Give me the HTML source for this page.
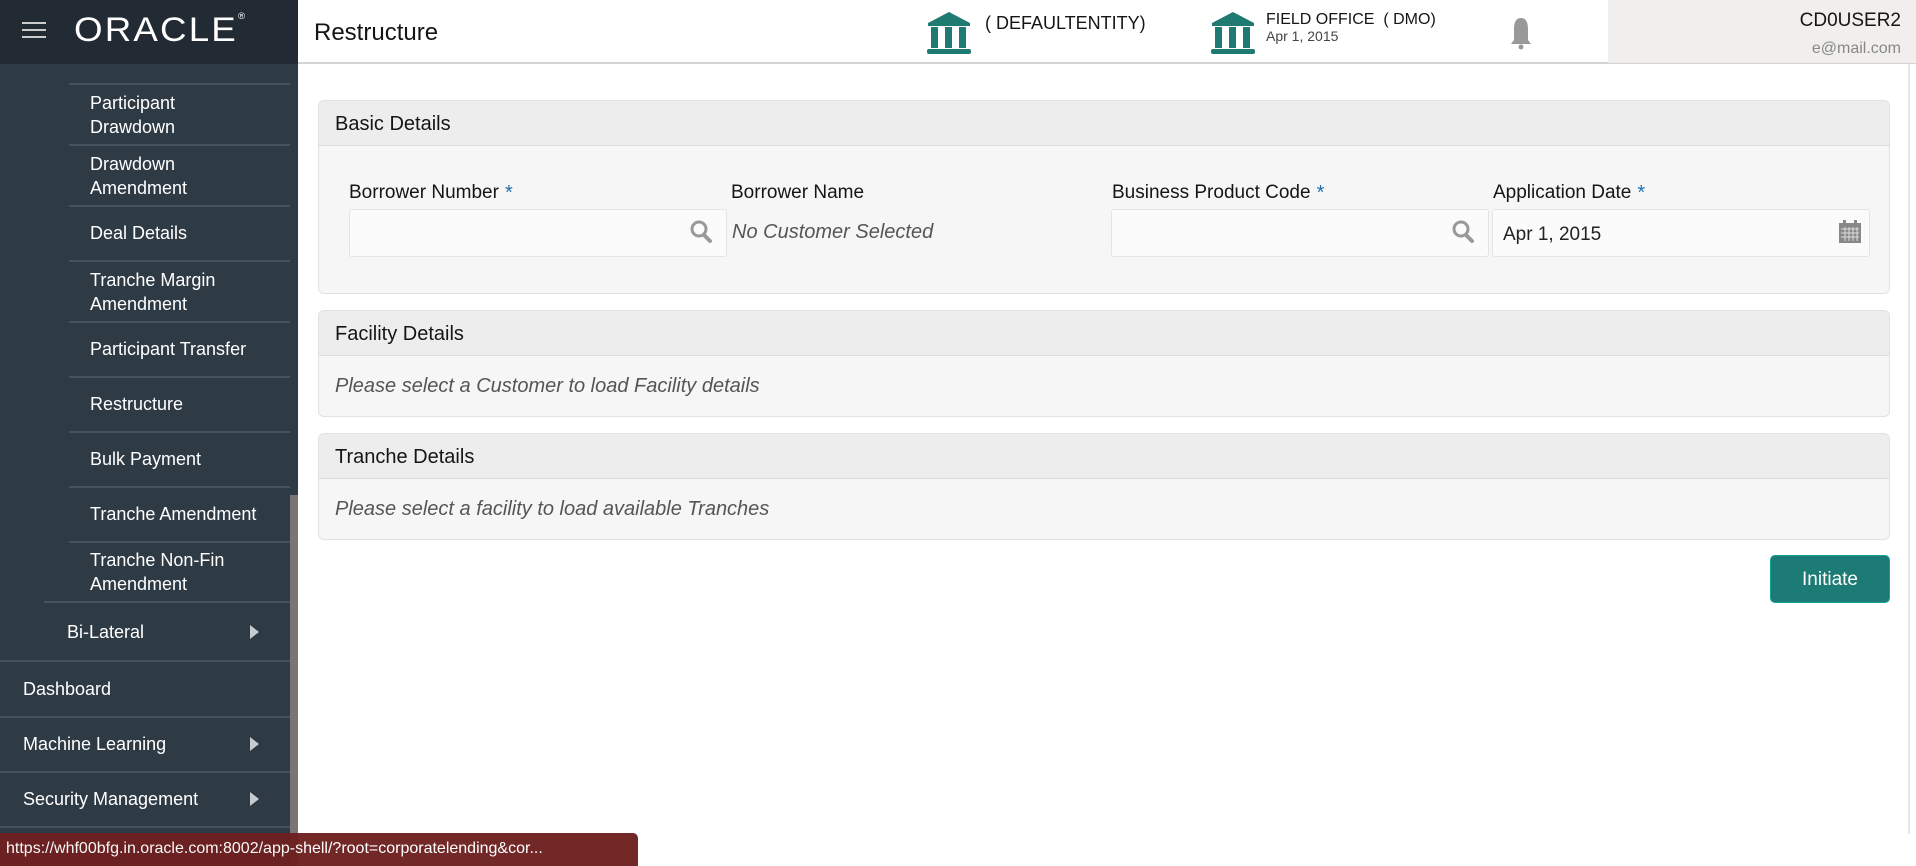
<!DOCTYPE html>
<html><head><meta charset="utf-8"><style>
*{margin:0;padding:0;box-sizing:border-box}
body{width:1916px;height:866px;overflow:hidden;background:#fff;font-family:"Liberation Sans",sans-serif;position:relative;color:#161513}
.a{position:absolute;white-space:nowrap}
#side{position:absolute;left:0;top:0;width:298px;height:866px;background:#2e3a44}
.si{position:absolute;color:#fff;font-size:18px;line-height:24px}
.dv{position:absolute;height:2px;background:#46535e}
.arr{position:absolute;width:0;height:0;border-top:7px solid transparent;border-bottom:7px solid transparent;border-left:9px solid #c8ccd0}
.panel{position:absolute;left:318px;width:1572px;border:1px solid #e2e2e2;border-radius:6px;background:#f6f6f6;overflow:hidden}
.ph{height:45px;background:#ededed;border-bottom:1px solid #dcdcdc;font-size:20px;line-height:47px;padding-left:16px}
.lbl{position:absolute;font-size:19px;top:182px}
.star{color:#1f6fb0;font-size:20px;vertical-align:top;margin-left:6px}
.inp{position:absolute;top:209px;height:48px;border:1px solid #e4e4e4;border-radius:3px;background:#fbfbfb}
.it{font-style:italic;color:#555;font-size:20px}
</style></head><body>
<div id="side">
<div style="position:absolute;left:0;top:0;width:298px;height:64px;background:#222a33"></div>
<div class="a" style="left:22px;top:22px;width:24px;height:2px;background:#ccc;box-shadow:0 7px 0 #ccc,0 14px 0 #ccc"></div>
<div class="a" style="left:74px;top:11px;color:#fff;font-size:34px;letter-spacing:2px;transform:scaleX(1.08);transform-origin:left">ORACLE<span style="font-size:9px;vertical-align:top">®</span></div>
<div class="dv" style="left:69px;top:83px;width:221px"></div>
<div class="si" style="left:90px;top:91px">Participant<br>Drawdown</div>
<div class="dv" style="left:69px;top:144px;width:221px"></div>
<div class="si" style="left:90px;top:152px">Drawdown<br>Amendment</div>
<div class="dv" style="left:69px;top:205px;width:221px"></div>
<div class="si" style="left:90px;top:221px">Deal Details</div>
<div class="dv" style="left:69px;top:260px;width:221px"></div>
<div class="si" style="left:90px;top:268px">Tranche Margin<br>Amendment</div>
<div class="dv" style="left:69px;top:321px;width:221px"></div>
<div class="si" style="left:90px;top:337px">Participant Transfer</div>
<div class="dv" style="left:69px;top:376px;width:221px"></div>
<div class="si" style="left:90px;top:392px">Restructure</div>
<div class="dv" style="left:69px;top:431px;width:221px"></div>
<div class="si" style="left:90px;top:447px">Bulk Payment</div>
<div class="dv" style="left:69px;top:486px;width:221px"></div>
<div class="si" style="left:90px;top:502px">Tranche Amendment</div>
<div class="dv" style="left:69px;top:541px;width:221px"></div>
<div class="si" style="left:90px;top:548px">Tranche Non-Fin<br>Amendment</div>
<div class="dv" style="left:44px;top:601px;width:246px"></div>
<div class="si" style="left:67px;top:620px">Bi-Lateral</div><div class="arr" style="left:250px;top:625px"></div>
<div class="dv" style="left:0;top:660px;width:290px"></div>
<div class="si" style="left:23px;top:677px">Dashboard</div>
<div class="dv" style="left:0;top:716px;width:290px"></div>
<div class="si" style="left:23px;top:732px">Machine Learning</div><div class="arr" style="left:250px;top:737px"></div>
<div class="dv" style="left:0;top:771px;width:290px"></div>
<div class="si" style="left:23px;top:787px">Security Management</div><div class="arr" style="left:250px;top:792px"></div>
<div class="dv" style="left:0;top:826px;width:290px"></div>
<div class="a" style="left:290px;top:495px;width:8px;height:371px;background:#7a7575"></div>
</div>
<div class="a" style="left:298px;top:0;width:1618px;height:64px;border-bottom:2px solid #d4d4d4;background:#fff"></div>
<div class="a" style="left:1608px;top:0;width:308px;height:63px;background:#f0efed"></div>
<div class="a" style="left:314px;top:19px;font-size:24px">Restructure</div>
<svg class="a" style="left:926px;top:12px" width="46" height="42" viewBox="0 0 46 42"><path d="M23 0L44 11V14H2V11Z" fill="#1f7a72"/><rect x="5" y="15" width="7" height="21" fill="#1f7a72"/><rect x="19" y="15" width="7" height="21" fill="#1f7a72"/><rect x="33" y="15" width="7" height="21" fill="#1f7a72"/><rect x="1" y="37" width="44" height="5" rx="2" fill="#1f7a72"/></svg>
<div class="a" style="left:985px;top:13px;font-size:18px">( DEFAULTENTITY)</div>
<svg class="a" style="left:1210px;top:12px" width="46" height="42" viewBox="0 0 46 42"><path d="M23 0L44 11V14H2V11Z" fill="#1f7a72"/><rect x="5" y="15" width="7" height="21" fill="#1f7a72"/><rect x="19" y="15" width="7" height="21" fill="#1f7a72"/><rect x="33" y="15" width="7" height="21" fill="#1f7a72"/><rect x="1" y="37" width="44" height="5" rx="2" fill="#1f7a72"/></svg>
<div class="a" style="left:1266px;top:11px;font-size:16px">FIELD OFFICE &nbsp;( DMO)</div>
<div class="a" style="left:1266px;top:28px;font-size:14px;color:#444">Apr 1, 2015</div>
<svg class="a" style="left:1510px;top:16px" width="22" height="34" viewBox="0 0 22 34"><path d="M11 2C5 2 4 8 4 14V24L1 28H21L18 24V14C18 8 17 2 11 2Z" fill="#999"/><circle cx="11" cy="31" r="2.5" fill="#999"/></svg>
<div class="a" style="right:15px;top:10px;font-size:19px">CD0USER2</div>
<div class="a" style="right:15px;top:40px;font-size:16px;color:#888">e@mail.com</div>
<div class="a" style="left:1908px;top:64px;width:2px;height:770px;background:#e6e6e6"></div>

<div class="panel" style="top:100px;height:194px"><div class="ph">Basic Details</div></div>
<div class="lbl" style="left:349px">Borrower Number<span class="star">*</span></div>
<div class="lbl" style="left:731px">Borrower Name</div>
<div class="lbl" style="left:1112px">Business Product Code<span class="star">*</span></div>
<div class="lbl" style="left:1493px">Application Date<span class="star">*</span></div>
<div class="inp" style="left:349px;width:378px"></div>
<div class="inp" style="left:1111px;width:378px"></div>
<div class="inp" style="left:1492px;width:378px"></div>
<svg class="a" style="left:689px;top:219px" width="24" height="26" viewBox="0 0 24 26"><circle cx="10" cy="10" r="7" fill="none" stroke="#999" stroke-width="3"/><path d="M15 16L21 22" stroke="#999" stroke-width="4" stroke-linecap="round"/></svg>
<svg class="a" style="left:1451px;top:219px" width="24" height="26" viewBox="0 0 24 26"><circle cx="10" cy="10" r="7" fill="none" stroke="#999" stroke-width="3"/><path d="M15 16L21 22" stroke="#999" stroke-width="4" stroke-linecap="round"/></svg>
<div class="a it" style="left:732px;top:221px">No Customer Selected</div>
<div class="a" style="left:1503px;top:224px;font-size:19px;color:#222">Apr 1, 2015</div>
<svg class="a" style="left:1838px;top:220px" width="24" height="24" viewBox="0 0 24 24"><rect x="1" y="3" width="22" height="20" fill="#888"/><rect x="5" y="0" width="3" height="5" fill="#888"/><rect x="16" y="0" width="3" height="5" fill="#888"/><path d="M3 9H21M3 13H21M3 17H21M7 7V21M11 7V21M15 7V21M19 7V21" stroke="#ddd" stroke-width="1"/></svg>

<div class="panel" style="top:310px;height:107px"><div class="ph">Facility Details</div><div class="it" style="padding:19px 0 0 16px">Please select a Customer to load Facility details</div></div>
<div class="panel" style="top:433px;height:107px"><div class="ph">Tranche Details</div><div class="it" style="padding:19px 0 0 16px">Please select a facility to load available Tranches</div></div>
<div class="a" style="left:1770px;top:555px;width:120px;height:48px;background:#1c7b74;border:1px solid #14a095;border-radius:5px;color:#fff;font-size:19px;line-height:48px;text-align:center">Initiate</div>

<div class="a" style="left:0;top:833px;width:638px;height:33px;background:#6e2020;border-radius:0 5px 0 0;color:#fff;font-size:16px;line-height:32px;padding-left:6px;opacity:.96">https://whf00bfg.in.oracle.com:8002/app-shell/?root=corporatelending&amp;cor...</div>
</body></html>
